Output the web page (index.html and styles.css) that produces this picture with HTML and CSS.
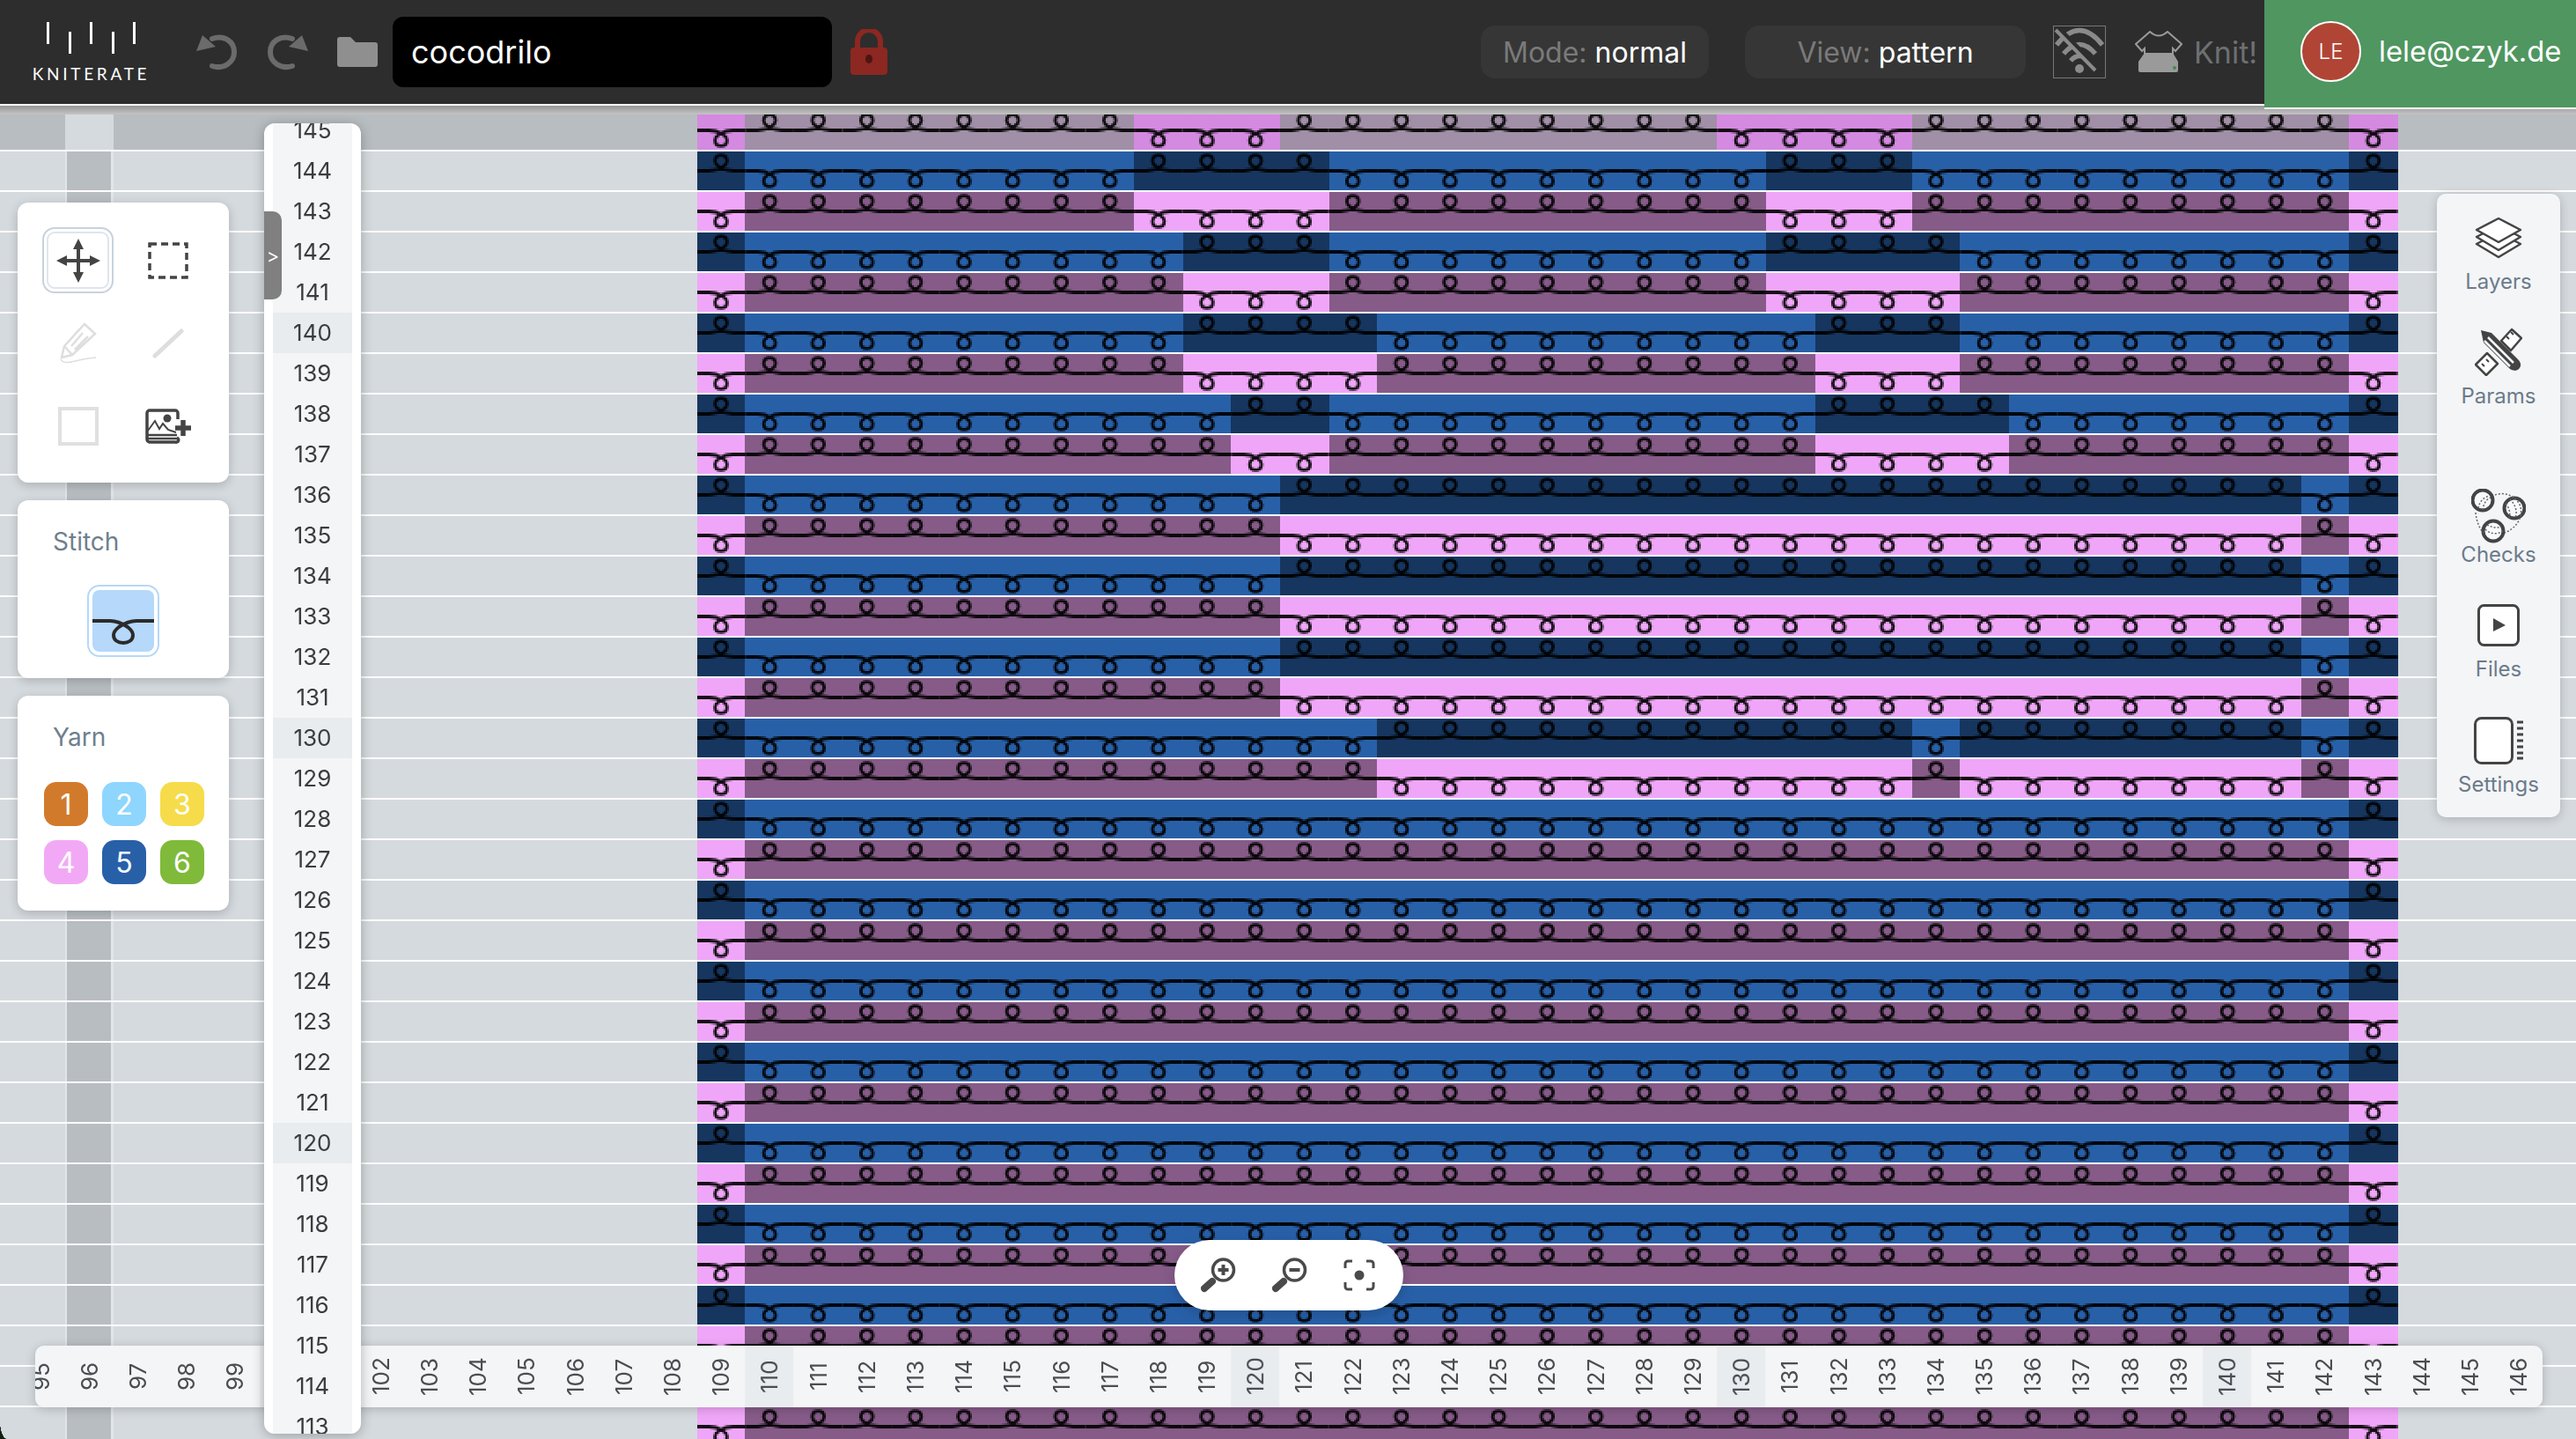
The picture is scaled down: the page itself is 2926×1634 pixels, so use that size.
FILE: index.html
```html
<!DOCTYPE html>
<html lang="en">
<head>
<meta charset="utf-8">
<title>Kniterate</title>
<link rel="stylesheet" href="styles.css">
</head>
<body>
<header class="topbar">
  <div class="logo">
    <div class="logo-bars"><i class="up"></i><i class="down"></i><i class="up"></i><i class="down"></i><i class="up"></i></div>
    <div class="logo-word">KNITERATE</div>
  </div>
  <button class="tb-icon undo" aria-label="Undo">
    <svg width="46" height="42" viewBox="0 0 46 42"><path d="M18 6C31 1 43 9 43 21C43 33 31 41 18 37" fill="none" stroke="#6b6b6b" stroke-width="6" stroke-linecap="round"/><path d="M0 20L7 2L22 15Z" fill="#6b6b6b"/></svg>
  </button>
  <button class="tb-icon redo" aria-label="Redo">
    <svg width="46" height="42" viewBox="0 0 46 42"><path d="M28 6C15 1 3 9 3 21C3 33 15 41 28 37" fill="none" stroke="#6b6b6b" stroke-width="6" stroke-linecap="round"/><path d="M46 20L39 2L24 15Z" fill="#6b6b6b"/></svg>
  </button>
  <button class="tb-icon folder" aria-label="Open">
    <svg width="46" height="34" viewBox="0 0 46 34"><path d="M3 0H15L21 6H43A3 3 0 0 1 46 9V31A3 3 0 0 1 43 34H3A3 3 0 0 1 0 31V3A3 3 0 0 1 3 0Z" fill="#8f8f8f"/></svg>
  </button>
  <div class="name-input">cocodrilo</div>
  <svg class="lock" width="42" height="52" viewBox="0 0 42 52"><path d="M8 24V14A13 13 0 0 1 34 14V24" fill="none" stroke="#8c2722" stroke-width="6"/><rect y="21" width="42" height="31" rx="4" fill="#8c2722"/><ellipse cx="21" cy="34" rx="4" ry="5" fill="#4d1512"/></svg>
  <div class="spacer"></div>
  <div class="pill mode"><span class="dim">Mode:</span> normal</div>
  <div class="pill view"><span class="dim">View:</span> pattern</div>
  <div class="wifi">
    <svg width="58" height="58" viewBox="0 0 58 58"><g fill="none" stroke="#8a8a8a" stroke-width="5.5"><path d="M3 21Q29 -12 55 21"/><path d="M11 31Q29 10 47 31"/><path d="M19 39Q29 28 39 39"/></g><circle cx="29" cy="48" r="5" fill="#8a8a8a"/><path d="M5 3L50 49" stroke="#2d2d2d" stroke-width="7"/><path d="M2 4L47 50" stroke="#8a8a8a" stroke-width="4"/></svg>
  </div>
  <div class="knit">
    <svg width="54" height="48" viewBox="0 0 54 48"><path d="M17 1Q27 10 37 1L53 15L46 23L43 20V26H11V20L8 23L1 15Z" fill="none" stroke="#9a9a9a" stroke-width="2"/><path d="M11 25H43L49 35V45A2 2 0 0 1 47 47H6A2 2 0 0 1 4 45V35Z" fill="#9a9a9a"/><circle cx="45" cy="42" r="2" fill="#3d8a55"/></svg>
    <span>Knit!</span>
  </div>
  <div class="user">
    <div class="avatar">LE</div>
    <div class="email">lele@czyk.de</div>
  </div>
</header>

<main class="workspace">
  <div class="hover-row"></div>
  <div class="col-stripe"></div>
  <div class="grid-lines"></div>
  <canvas id="pattern" class="pattern" width="966" height="752"></canvas>
  <div class="header-shadow"></div>

  <div class="toolbar">
    <section class="card tools">
      <button class="tool selected" aria-label="Move">
        <svg width="50" height="50" viewBox="0 0 50 50"><path d="M25 5V45M5 25H45" stroke="#444" stroke-width="4"/><path d="M25 0L31 12H19ZM25 50L19 38H31ZM0 25L12 19V31ZM50 25L38 31V19Z" fill="#444"/></svg>
      </button>
      <button class="tool" aria-label="Select">
        <svg width="46" height="42" viewBox="0 0 46 42"><rect x="2" y="2" width="42" height="38" fill="none" stroke="#444" stroke-width="3.5" stroke-dasharray="8 5"/></svg>
      </button>
      <button class="tool" aria-label="Pencil">
        <svg width="44" height="48" viewBox="0 0 44 48"><path d="M29 2L41 13L15 37L3 40L6 27Z M10 23L23 8M14 27L27 12M18 31L33 16M6 27L15 37" fill="none" stroke="#dedede" stroke-width="2.5"/><path d="M2 42C6 50 18 42 42 40" fill="none" stroke="#dedede" stroke-width="1.5"/></svg>
      </button>
      <button class="tool" aria-label="Line">
        <svg width="36" height="34" viewBox="0 0 36 34"><path d="M3 31L33 3" stroke="#dedede" stroke-width="5" stroke-linecap="round"/></svg>
      </button>
      <button class="tool" aria-label="Rectangle">
        <svg width="46" height="44" viewBox="0 0 46 44"><rect x="2" y="2" width="42" height="40" fill="none" stroke="#e0e0e0" stroke-width="4"/></svg>
      </button>
      <button class="tool" aria-label="Add image">
        <svg width="52" height="40" viewBox="0 0 52 40"><path d="M36 33V33A2 2 0 0 1 34 38H5A3 3 0 0 1 2 35V5A3 3 0 0 1 5 2H34A3 3 0 0 1 37 5V12" fill="none" stroke="#444" stroke-width="3.5"/><circle cx="25" cy="11" r="4.5" fill="#444"/><path d="M3 25L11 14L16 23L20 17L26 24L35 27" fill="none" stroke="#444" stroke-width="2"/><path d="M3 30H36M3 34H36" stroke="#444" stroke-width="2.5"/><path d="M43 13V31M34 22H52" stroke="#444" stroke-width="5.5"/></svg>
      </button>
    </section>

    <section class="card stitch-card">
      <h2 class="card-title">Stitch</h2>
      <button class="stitch-btn" aria-label="Stitch">
        <svg width="70" height="70" viewBox="0 0 70 70"><path d="M0 35H20C28 35 34 38 40 42C45 46 46 48 46 51C46 57 41 60 35 60C29 60 24 57 24 51C24 48 25 46 30 42C36 38 42 35 50 35H70" fill="none" stroke="#2b2b2b" stroke-width="4"/></svg>
      </button>
    </section>

    <section class="card yarn-card">
      <h2 class="card-title">Yarn</h2>
      <div class="yarns">
        <button class="yarn y1">1</button>
        <button class="yarn y2">2</button>
        <button class="yarn y3">3</button>
        <button class="yarn y4">4</button>
        <button class="yarn y5">5</button>
        <button class="yarn y6">6</button>
      </div>
    </section>
  </div>

  <div class="col-ruler">
    <div class="col-track">
      <span>95</span><span>96</span><span>97</span><span>98</span><span>99</span><span class="hl">100</span><span>101</span><span>102</span><span>103</span><span>104</span><span>105</span><span>106</span><span>107</span><span>108</span><span>109</span><span class="hl">110</span><span>111</span><span>112</span><span>113</span><span>114</span><span>115</span><span>116</span><span>117</span><span>118</span><span>119</span><span class="hl">120</span><span>121</span><span>122</span><span>123</span><span>124</span><span>125</span><span>126</span><span>127</span><span>128</span><span>129</span><span class="hl">130</span><span>131</span><span>132</span><span>133</span><span>134</span><span>135</span><span>136</span><span>137</span><span>138</span><span>139</span><span class="hl">140</span><span>141</span><span>142</span><span>143</span><span>144</span><span>145</span><span>146</span>
    </div>
  </div>

  <div class="row-ruler">
    <div class="row-track">
      <span>145</span><span>144</span><span>143</span><span>142</span><span>141</span><span class="hl">140</span><span>139</span><span>138</span><span>137</span><span>136</span><span>135</span><span>134</span><span>133</span><span>132</span><span>131</span><span class="hl">130</span><span>129</span><span>128</span><span>127</span><span>126</span><span>125</span><span>124</span><span>123</span><span>122</span><span>121</span><span class="hl">120</span><span>119</span><span>118</span><span>117</span><span>116</span><span>115</span><span>114</span><span>113</span>
    </div>
  </div>
  <button class="collapse">&gt;</button>

  <aside class="side-panel">
    <button class="side-item layers">
      <svg width="54" height="48" viewBox="0 0 54 48"><g fill="#fff" stroke="#444" stroke-width="2.5" stroke-linejoin="round"><path d="M27 18L52 31L27 46L2 31Z"/><path d="M27 10L52 23L27 38L2 23Z"/><path d="M27 2L52 15L27 29L2 15Z"/></g></svg>
      <span>Layers</span>
    </button>
    <button class="side-item params">
      <svg width="54" height="54" viewBox="0 0 54 54"><g fill="#fff" stroke="#444" stroke-width="2.5" stroke-linejoin="round"><path d="M1 41L14 28L26 40L13 53Z"/><path d="M30 14L42 1L53 11L41 25Z"/></g><path d="M8 40l3 3M13 35l3 3M36 9l3 3M41 4l3 3" stroke="#444" stroke-width="2"/><path d="M7 2L19 5L49 35C53 39 53 43 50 46C47 49 42 48 39 45L10 16Z" fill="#444"/><path d="M15 10L44 39M11 14L40 43" stroke="#f4f5f7" stroke-width="2.5"/></svg>
      <span>Params</span>
    </button>
    <button class="side-item checks">
      <svg width="62" height="62" viewBox="0 0 62 62"><g fill="#fff" fill-opacity=".4" stroke="#444" stroke-width="4"><circle cx="13" cy="13" r="11.5"/><circle cx="49" cy="22" r="11.5"/><circle cx="25" cy="48" r="11.5"/></g><g fill="none" stroke="#666" stroke-width="1.5" stroke-dasharray="2 2"><path d="M27 7C38 3 50 8 55 18C60 30 53 44 38 50"/><path d="M5 27C6 38 10 46 14 50"/><path d="M8 22C9 15 14 10 20 8M13 24C14 17 17 12 22 10"/><path d="M44 12C50 18 53 26 50 33M39 17C43 21 45 28 43 33"/><path d="M16 46C22 52 30 52 36 48M18 41C24 44 30 45 34 43"/></g></svg>
      <span>Checks</span>
    </button>
    <button class="side-item files">
      <svg width="48" height="48" viewBox="0 0 48 48"><rect x="1.5" y="1.5" width="45" height="45" rx="6" fill="#fff" stroke="#444" stroke-width="3"/><path d="M18 16L32 24L18 31Z" fill="#444"/></svg>
      <span>Files</span>
    </button>
    <button class="side-item settings">
      <svg width="56" height="54" viewBox="0 0 56 54"><rect x="1.5" y="1.5" width="42" height="51" rx="7" fill="#fff" stroke="#444" stroke-width="3"/><path d="M49 6H56M49 13H56M49 20H56M49 27H56M49 34H56M49 41H56M49 47H56" stroke="#444" stroke-width="3"/></svg>
      <span>Settings</span>
    </button>
  </aside>

  <div class="zoom-pill">
    <button class="zoom-btn" aria-label="Zoom in">
      <svg width="40" height="40" viewBox="0 0 40 40"><circle cx="25.5" cy="14" r="12" fill="none" stroke="#4a4a4a" stroke-width="3.5"/><path d="M25.500 8V20M19.500 14H31.500" stroke="#4a4a4a" stroke-width="4"/><path d="M4 35L13 27" stroke="#4a4a4a" stroke-width="8" stroke-linecap="round"/></svg>
    </button>
    <button class="zoom-btn" aria-label="Zoom out">
      <svg width="40" height="40" viewBox="0 0 40 40"><circle cx="25.500" cy="14" r="12" fill="none" stroke="#4a4a4a" stroke-width="3.5"/><path d="M19.500 14H31.500" stroke="#4a4a4a" stroke-width="4"/><path d="M4 35L13 27" stroke="#4a4a4a" stroke-width="8" stroke-linecap="round"/></svg>
    </button>
    <button class="zoom-btn" aria-label="Fit">
      <svg width="36" height="36" viewBox="0 0 36 36"><path d="M2 10V5A3 3 0 0 1 5 2H10M26 2H31A3 3 0 0 1 34 5V10M34 26V31A3 3 0 0 1 31 34H26M10 34H5A3 3 0 0 1 2 31V26" fill="none" stroke="#4a4a4a" stroke-width="3"/><circle cx="18" cy="18" r="5.500" fill="#4a4a4a"/></svg>
    </button>
  </div>
  <div class="corner"></div>
</main>
<script src="script.js"></script>
</body>
</html>
```
FILE: styles.css
```css
* { box-sizing: border-box; }
html, body { margin: 0; height: 100%; }
body {
  font-family: "Inter", "Liberation Sans", sans-serif;
  display: flex;
  flex-direction: column;
  overflow: hidden;
  background: #d5dade;
}
button { border: 0; padding: 0; background: none; font: inherit; color: inherit; display: flex; align-items: center; justify-content: center; }
h2 { margin: 0; font: inherit; }

/* top bar */
.topbar {
  flex: none;
  height: 120px;
  background: #2d2d2d;
  border-bottom: 2px solid #fff;
  display: flex;
  align-items: center;
  position: relative;
  z-index: 5;
}
.logo { width: 127px; margin-left: 40px; display: flex; flex-direction: column; align-items: center; }
.logo-bars { display: flex; gap: 21.500px; height: 36px; }
.logo-bars i { width: 3px; height: 25px; background: #fff; display: block; }
.logo-bars .down { margin-top: 11px; }
.logo-word { margin-top: 13px; color: #fff; font: 400 19px/20px "Lato", sans-serif; letter-spacing: 3.700px; white-space: nowrap; }
.tb-icon { width: 46px; height: 42px; }
.undo { margin-left: 56px; }
.redo { margin-left: 35px; }
.folder { margin-left: 33px; }
.name-input {
  margin-left: 17px;
  width: 499px;
  height: 80px;
  border-radius: 12px;
  background: #000;
  color: #fff;
  font-size: 36px;
  display: flex;
  align-items: center;
  padding-left: 21px;
}
.lock { margin-left: 21px; flex: none; }
.spacer { flex: 1; }
.pill {
  height: 60px;
  border-radius: 16px;
  background: #363636;
  color: #fff;
  font-size: 32px;
  display: flex;
  align-items: center;
  justify-content: center;
  gap: 9px;
  white-space: nowrap;
}
.pill .dim { color: #7a7a7a; }
.mode { width: 259px; }
.view { width: 319px; margin-left: 41px; }
.wifi { width: 60px; height: 60px; margin-left: 31px; border: 1px solid #777; display: flex; align-items: center; justify-content: center; }
.knit { margin-left: 33px; display: flex; align-items: center; gap: 13px; color: #6d7072; font-size: 34px; width: 136px; }
.knit svg { flex: none; }
.user {
  margin-left: 11px;
  align-self: flex-start;
  width: 354px;
  height: 124px;
  background: #4f9660;
  border-bottom: 2px solid #fff;
  display: flex;
  align-items: center;
  padding: 0 0 6px 41px;
  gap: 20px;
}
.avatar {
  width: 69px;
  height: 69px;
  border-radius: 50%;
  background: #b04535;
  border: 2px solid #fff;
  color: #fff;
  font-size: 24px;
  font-weight: 300;
  display: flex;
  align-items: center;
  justify-content: center;
}
.email { color: #fff; font-size: 32.800px; white-space: nowrap; }

/* workspace */
.workspace { flex: 1; position: relative; overflow: hidden; }
.grid-lines {
  position: absolute;
  inset: 0;
  background: linear-gradient(to bottom, transparent 44px, #fff 44px) 0 6px / 100% 46px;
}
.hover-row { position: absolute; left: 0; right: 0; top: 10px; height: 40px; background: #b8bdc1; }
.col-stripe {
  position: absolute;
  left: 74px;
  width: 55px;
  top: 50px;
  bottom: 0;
  background: #b8bdc2;
  border-left: 2px solid #e2e5e8;
  border-right: 3px solid #e2e5e8;
}
.col-stripe::before {
  content: "";
  position: absolute;
  left: -2px;
  right: -3px;
  top: -40px;
  height: 40px;
  background: #d5dade;
}
.pattern {
  position: absolute;
  left: 792px;
  top: 10px;
  width: 1932px;
  height: 1504px;
  image-rendering: pixelated;
}
.header-shadow {
  position: absolute;
  left: 0;
  right: 0;
  top: 0;
  height: 10px;
  background: linear-gradient(to bottom, #969696, #c4c4c4);
}
.corner {
  position: absolute;
  left: 0;
  bottom: 0;
  width: 8px;
  height: 20px;
  background: radial-gradient(ellipse 8px 20px at 100% 0, transparent 98%, #10200f 100%);
}

/* left cards */
.toolbar {
  position: absolute;
  left: 20px;
  top: 110px;
  width: 240px;
  display: flex;
  flex-direction: column;
  gap: 20px;
}
.card { background: #fff; border-radius: 12px; box-shadow: 0 3px 12px rgba(0, 0, 0, .2); }
.tools {
  height: 318px;
  padding: 28px;
  display: grid;
  grid-template-columns: 81px 81px;
  grid-auto-rows: 75px;
  column-gap: 21px;
  row-gap: 19px;
}
.tool { border-radius: 14px; }
.tool.selected { border: 2px solid #c8d2de; outline: 2px solid #dfe5ec; outline-offset: -7px; }
.card-title { color: #6f7f8d; font-size: 28px; line-height: 34px; padding-left: 40px; }
.stitch-card { height: 202px; padding-top: 30px; }
.stitch-btn {
  width: 82px;
  height: 82px;
  margin: 32px 0 0 79px;
  border: 2px solid #b5d8fb;
  border-radius: 14px;
  position: relative;
}
.stitch-btn svg { background: #b5d8fb; border-radius: 8px; }
.yarn-card { height: 244px; padding-top: 30px; }
.yarns {
  margin: 34px 0 0 30px;
  display: grid;
  grid-template-columns: repeat(3, 50px);
  grid-auto-rows: 50px;
  gap: 16px;
}
.yarn { border-radius: 14px; color: #fff; font-size: 32px; }
.y1 { background: #d27a2c; }
.y2 { background: #8ed6fd; }
.y3 { background: #f6dc4a; }
.y4 { background: #f2a9f5; }
.y5 { background: #2860a8; }
.y6 { background: #7fba3a; }

/* rulers */
.col-ruler {
  position: absolute;
  left: 40px;
  top: 1408px;
  width: 2848px;
  height: 70px;
  background: #f4f5f7;
  border-radius: 10px;
  overflow: hidden;
  box-shadow: 0 2px 12px rgba(0, 0, 0, .2);
}
.col-track { display: flex; margin-left: -21.400px; height: 100%; }
.col-track span {
  flex: 0 0 55.200px;
  display: flex;
  align-items: center;
  justify-content: center;
  writing-mode: vertical-rl;
  transform: rotate(180deg);
  font-size: 26px;
  color: #4a4e52;
}
.row-ruler {
  position: absolute;
  left: 300px;
  top: 20px;
  width: 110px;
  height: 1488px;
  background: #fff;
  border-radius: 12px;
  padding: 0 10px;
  box-shadow: 0 2px 14px rgba(0, 0, 0, .28);
  overflow: hidden;
}
.row-track { height: 100%; overflow: hidden; background: #f4f5f7; }
.row-track span {
  display: flex;
  height: 46px;
  align-items: center;
  justify-content: center;
  font-size: 26px;
  color: #3a3d40;
  position: relative;
  top: -16px;
}
.row-track .hl { top: -15px; padding-bottom: 1px; }
.hl { background: #e9ecef; }
.collapse {
  position: absolute;
  left: 300px;
  top: 120px;
  width: 20px;
  height: 100px;
  background: #808080;
  border-radius: 0 10px 10px 0;
  color: #fff;
  font-size: 22px;
}

/* right panel */
.side-panel {
  position: absolute;
  left: 2768px;
  top: 100px;
  width: 140px;
  height: 708px;
  background: #f4f5f7;
  border-radius: 10px;
  box-shadow: 0 2px 12px rgba(0, 0, 0, .2);
  display: flex;
  flex-direction: column;
  align-items: center;
  padding-top: 26px;
}
.side-item { flex-direction: column; color: #6b7b8a; font-size: 24px; line-height: 30px; }
.side-item span { margin-top: 11px; }
.params { margin-top: 38px; }
.params span { margin-top: 8px; }
.checks { margin-top: 90px; }
.checks span { margin-top: -2px; }
.files { margin-top: 41px; }
.settings { margin-top: 39px; }
.settings span { margin-top: 8px; }

/* zoom */
.zoom-pill {
  position: absolute;
  left: 1334px;
  top: 1288px;
  width: 260px;
  height: 80px;
  border-radius: 40px;
  background: #fff;
  box-shadow: 0 4px 14px rgba(0, 0, 0, .18);
  display: flex;
  align-items: center;
  padding-left: 30px;
  gap: 41px;
}
```
FILE: script.js
```js
// Draws the knit pattern: two-state cells per row, with a loop above or below the yarn line.
(function () {
  var canvas = document.getElementById('pattern');
  var ctx = canvas.getContext('2d');
  var COL = 27.6, ROW = 23, FIRST = 109, LAST = 143, ORIGIN = -0.3;

  var runs = {
    145: [[118, 120], [130, 133]],
    144: [[118, 121], [131, 133]], 143: [[118, 121], [131, 133]],
    142: [[119, 121], [131, 134]], 141: [[119, 121], [131, 134]],
    140: [[119, 122], [132, 134]], 139: [[119, 122], [132, 134]],
    138: [[120, 121], [132, 135]], 137: [[120, 121], [132, 135]],
    136: [[121, 141]], 135: [[121, 141]], 134: [[121, 141]],
    133: [[121, 141]], 132: [[121, 141]], 131: [[121, 141]],
    130: [[123, 133], [135, 141]], 129: [[123, 133], [135, 141]]
  };

  var loop = new Path2D('M0,0 H7 C10,0 12.3,.7 14.7,2.2 C16.3,3.1 17.2,4.2 17.2,5.5 C17.2,7.4 15.7,8.9 13.8,8.9 C11.9,8.9 10.4,7.4 10.4,5.5 C10.4,4.2 11.3,3.1 12.9,2.2 C15.3,.7 17.6,0 20.6,0 H27.6');

  function isBack(row, col) {
    if (col === FIRST || col === LAST) return true;
    return (runs[row] || []).some(function (r) { return col >= r[0] && col <= r[1]; });
  }

  function fill(row, back) {
    if (row === 145) return back ? '#d48ae0' : '#a08fa6';
    if (row % 2) return back ? '#f0a6f8' : '#865b88';
    return back ? '#16365f' : '#2860a8';
  }

  for (var row = 145; row >= 113; row--) {
    var top = 21 + (144 - row) * ROW;
    for (var col = FIRST; col <= LAST; col++) {
      var x0 = Math.max(0, Math.round((col - FIRST) * COL + ORIGIN));
      var x1 = col === LAST ? 966 : Math.round((col - FIRST + 1) * COL + ORIGIN);
      var back = isBack(row, col);
      ctx.fillStyle = fill(row, back);
      ctx.fillRect(x0, top, x1 - x0, 22);
    }
    for (col = FIRST; col <= LAST; col++) {
      back = isBack(row, col);
      var up = (row % 2 === 0) === back;
      ctx.save();
      ctx.translate((col - FIRST) * COL + ORIGIN, top + 11);
      ctx.scale(1, up ? -1 : 1);
      ctx.strokeStyle = 'rgba(0,0,0,.92)';
      ctx.lineWidth = 1.8;
      ctx.stroke(loop);
      ctx.restore();
    }
  }
})();
```
